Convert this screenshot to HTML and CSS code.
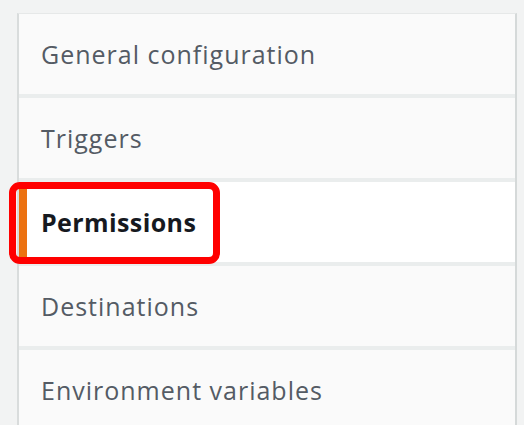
FILE: index.html
```html
<!DOCTYPE html>
<html>
<head>
<meta charset="utf-8">
<link rel="stylesheet" href="styles.css">
</head>
<body>
<nav class="panel">
  <div class="item">General configuration</div>
  <div class="item">Triggers</div>
  <div class="item active">Permissions<span class="highlight"></span></div>
  <div class="item">Destinations</div>
  <div class="item">Environment variables</div>
</nav>
</body>
</html>
```
FILE: styles.css
```css
html, body {
  margin: 0;
  height: 100%;
  background: #f2f3f3;
  overflow: hidden;
}
body {
  padding: 13px 0 0 17px;
  box-sizing: border-box;
}
.panel {
  width: 500px;
  box-sizing: border-box;
  border-left: 2px solid #d9dcdc;
  border-right: 2px solid #d5d9d9;
  border-top: 1px solid #e6e8e8;
  background: #eaeded;
  display: flex;
  flex-direction: column;
  gap: 4px;
}
.item {
  position: relative;
  height: 80px;
  display: flex;
  align-items: center;
  padding-left: 22px;
  background: #fafafa;
  font-family: "Open Sans", sans-serif;
  font-size: 25px;
  letter-spacing: 1px;
  color: #545b64;
}
.item.active {
  background: #ffffff;
  color: #16191f;
  font-weight: 700;
  letter-spacing: 0.4px;
  padding-left: 14px;
  border-left: 8px solid #ec7211;
}
.highlight {
  position: absolute;
  left: -18px;
  top: 0;
  width: 197px;
  height: 68px;
  border: 7px solid #ff0000;
  border-radius: 11px;
}
```
